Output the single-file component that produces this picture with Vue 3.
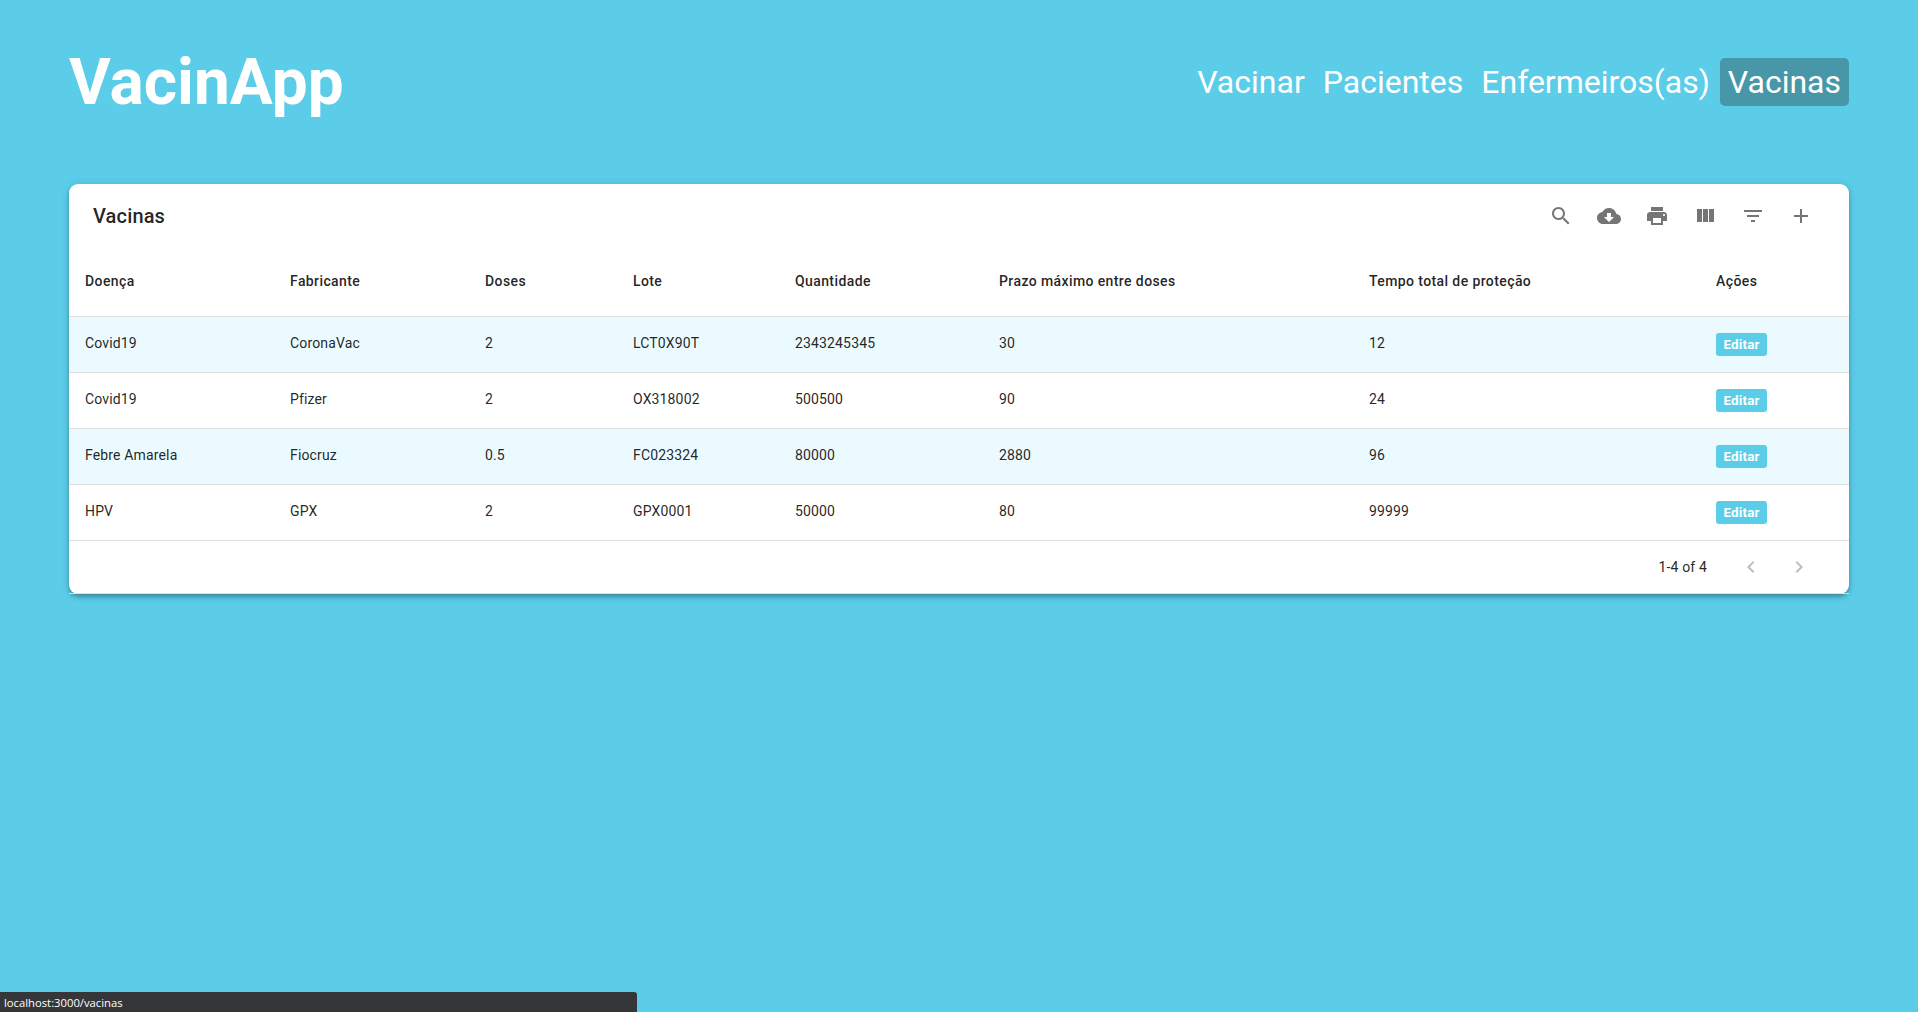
<script setup>
const nav = [
  { label: 'Vacinar' },
  { label: 'Pacientes' },
  { label: 'Enfermeiros(as)' },
  { label: 'Vacinas', active: true },
]
const tools = [
  'M15.5 14h-.79l-.28-.27C15.41 12.59 16 11.11 16 9.5 16 5.91 13.09 3 9.5 3S3 5.91 3 9.5 5.91 16 9.5 16c1.61 0 3.09-.59 4.23-1.57l.27.28v.79l5 4.99L20.49 19l-4.99-5zm-6 0C7.01 14 5 11.99 5 9.5S7.01 5 9.5 5 14 7.01 14 9.5 11.99 14 9.5 14z',
  'M19.35 10.04C18.67 6.59 15.64 4 12 4 9.11 4 6.6 5.64 5.35 8.04 2.34 8.36 0 10.91 0 14c0 3.31 2.69 6 6 6h13c2.76 0 5-2.24 5-5 0-2.64-2.05-4.78-4.65-4.96zM17 13l-5 5-5-5h3V9h4v4h3z',
  'M19 8H5c-1.66 0-3 1.34-3 3v6h4v4h12v-4h4v-6c0-1.66-1.34-3-3-3zm-3 11H8v-5h8v5zm3-7c-.55 0-1-.45-1-1s.45-1 1-1 1 .45 1 1-.45 1-1 1zm-1-9H6v4h12V3z',
  'M10 18h5V5h-5v13zm-6 0h5V5H4v13zM16 5v13h5V5h-5z',
  'M10 18h4v-2h-4v2zM3 6v2h18V6H3zm3 7h12v-2H6v2z',
  'M19 13h-6v6h-2v-6H5v-2h6V5h2v6h6v2z',
]
const columns = ['Doença', 'Fabricante', 'Doses', 'Lote', 'Quantidade', 'Prazo máximo entre doses', 'Tempo total de proteção', 'Ações']
const rows = [
  ['Covid19', 'CoronaVac', '2', 'LCT0X90T', '2343245345', '30', '12'],
  ['Covid19', 'Pfizer', '2', 'OX318002', '500500', '90', '24'],
  ['Febre Amarela', 'Fiocruz', '0.5', 'FC023324', '80000', '2880', '96'],
  ['HPV', 'GPX', '2', 'GPX0001', '50000', '80', '99999'],
]
</script>

<template>
  <div class="page">
    <header class="top">
      <h1 class="brand">VacinApp</h1>
      <nav class="nav">
        <a v-for="item in nav" :key="item.label" class="nav-link" :class="{ active: item.active }">{{ item.label }}</a>
      </nav>
    </header>

    <section class="card">
      <div class="toolbar">
        <h2 class="card-title">Vacinas</h2>
        <div class="tools">
          <button v-for="d in tools" :key="d" class="tool" type="button">
            <svg viewBox="0 0 24 24" width="24" height="24"><path :d="d" /></svg>
          </button>
        </div>
      </div>

      <table class="table">
        <colgroup>
          <col class="c1" /><col class="c2" /><col class="c3" /><col class="c4" />
          <col class="c5" /><col class="c6" /><col class="c7" /><col />
        </colgroup>
        <thead>
          <tr>
            <th v-for="c in columns" :key="c">{{ c }}</th>
          </tr>
        </thead>
        <tbody>
          <tr v-for="(row, i) in rows" :key="i" :class="{ odd: i % 2 === 0 }">
            <td v-for="(v, j) in row" :key="j" class="text-cell">{{ v }}</td>
            <td><button class="edit" type="button">Editar</button></td>
          </tr>
        </tbody>
      </table>

      <div class="pager">
        <span class="count">1-4 of 4</span>
        <button class="page-btn" type="button">
          <svg viewBox="0 0 24 24" width="24" height="24"><path d="M15.41 7.41L14 6l-6 6 6 6 1.41-1.41L10.83 12z" /></svg>
        </button>
        <button class="page-btn" type="button">
          <svg viewBox="0 0 24 24" width="24" height="24"><path d="M10 6L8.59 7.41 13.17 12l-4.58 4.59L10 18l6-6z" /></svg>
        </button>
      </div>
    </section>

    <div class="status">localhost:3000/vacinas</div>
  </div>
</template>

<style>
html, body { margin: 0; background: #5bcde8; }
</style>

<style scoped>
.page {
  min-height: 1012px;
  box-sizing: border-box;
  padding: 0 69px;
  background: #5bcde8;
  font-family: Roboto, "Liberation Sans", sans-serif;
  overflow: hidden;
}
.top {
  display: flex;
  align-items: center;
  justify-content: space-between;
  height: 164px;
}
.brand {
  margin: 0;
  padding-top: 2px;
  color: #fff;
  font-size: 64px;
  font-weight: 700;
  line-height: 1;
}
.nav { display: flex; gap: 2px; }
.nav-link {
  padding: 0 8px;
  height: 48px;
  line-height: 48px;
  color: #fff;
  font-size: 32px;
  font-weight: 400;
  border-radius: 5px;
}
.nav-link.active { background: #4797a9; }
.card {
  margin-top: 20px;
  background: #fff;
  border-radius: 9px;
  box-shadow: 0 2px 4px -1px rgba(0,0,0,.2), 0 4px 5px rgba(0,0,0,.14), 0 1px 10px rgba(0,0,0,.12);
}
.toolbar {
  display: flex;
  align-items: center;
  justify-content: space-between;
  height: 64px;
  padding: 0 24px;
}
.card-title {
  margin: 0;
  font-size: 20px;
  font-weight: 500;
  letter-spacing: .0075em;
  color: rgba(0,0,0,.87);
}
.tools { display: flex; }
.tool, .page-btn {
  width: 48px;
  height: 48px;
  padding: 0;
  border: 0;
  background: none;
  display: flex;
  align-items: center;
  justify-content: center;
}
.tool svg { fill: rgba(0,0,0,.54); }
.table {
  width: 100%;
  border-collapse: collapse;
  table-layout: fixed;
  font-size: 14px;
  letter-spacing: .01071em;
}
.c1 { width: 205px; }
.c2 { width: 195px; }
.c3 { width: 148px; }
.c4 { width: 162px; }
.c5 { width: 204px; }
.c6 { width: 370px; }
.c7 { width: 347px; }
th, td {
  padding: 0 16px;
  text-align: left;
  border-bottom: 1px solid #e0e0e0;
  height: 55px;
}
th {
  height: 68px;
  padding-bottom: 1px;
  box-sizing: border-box;
  font-weight: 500;
  letter-spacing: .4px;
  color: rgba(0,0,0,.87);
}
td { font-weight: 400; color: rgba(0,0,0,.87); }
td.text-cell { padding-bottom: 2px; box-sizing: border-box; height: 56px; }
tr.odd td { background: #eafaff; }
.edit {
  display: block;
  width: 51px;
  height: 23px;
  padding: 0;
  border: 0;
  border-radius: 3px;
  background: #5bcde8;
  color: #fff;
  font-family: inherit;
  font-size: 13.33px;
  font-weight: 700;
  letter-spacing: .2px;
}
.pager {
  display: flex;
  align-items: center;
  justify-content: flex-end;
  height: 53px;
  box-sizing: border-box;
  padding-right: 26px;
  border-bottom: 1px solid #e0e0e0;
}
.count {
  margin-right: 20px;
  font-size: 14px;
  letter-spacing: .01071em;
  color: rgba(0,0,0,.87);
}
.page-btn svg { fill: rgba(0,0,0,.26); }
.status {
  position: fixed;
  left: 0;
  bottom: 0;
  width: 637px;
  height: 20px;
  box-sizing: border-box;
  padding: 1px 0 0 4px;
  background: #35363a;
  border-top-right-radius: 3px;
  color: #fff;
  font-family: "Open Sans", "Liberation Sans", sans-serif;
  font-size: 11.25px;
  line-height: 19px;
}
</style>
